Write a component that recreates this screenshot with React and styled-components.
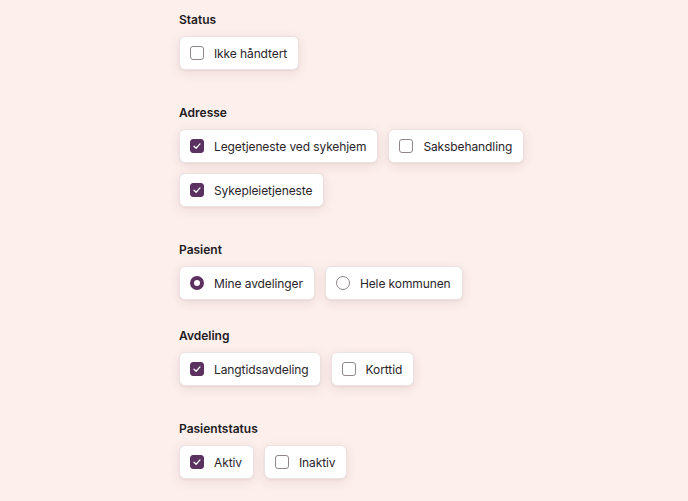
import React, { useState } from 'react';
import styled, { createGlobalStyle } from 'styled-components';

const GlobalStyle = createGlobalStyle`
    html, body {
        margin: 0;
        padding: 0;
        background: #fcefec;
    }
    body {
        font-family: Inter, "Noto Sans", sans-serif;
        color: #1e1a1e;
    }
`

const Page = styled.div`
    padding: 12px 0 20px 179px;
    display: flex;
    flex-direction: column;
    gap: 35px;
`

const Section = styled.section`
    display: flex;
    flex-direction: column;
    gap: 8px;
    margin-top: ${p => p.$tight ? '-7px' : '0'};
`

const Heading = styled.h3`
    margin: 0;
    font-size: 12px;
    line-height: 16px;
    font-weight: 600;
    color: #1e1a1e;
`

const Options = styled.div`
    display: flex;
    flex-wrap: wrap;
    gap: 10px;
    max-width: 360px;
`

const Chip = styled.label`
    display: inline-flex;
    align-items: center;
    gap: 10px;
    height: 34px;
    box-sizing: border-box;
    padding: 0 11px 0 10px;
    background: #fff;
    border: 1px solid #ece2e2;
    border-radius: 6px;
    box-shadow: 0 1px 2px rgba(70, 30, 40, 0.06), 0 3px 12px rgba(110, 50, 60, 0.10);
    font-size: 12px;
    letter-spacing: -0.1px;
    color: #2a242a;
    cursor: pointer;
    user-select: none;
`

const Box = styled.span`
    width: 14px;
    height: 14px;
    box-sizing: border-box;
    border-radius: 3px;
    display: flex;
    align-items: center;
    justify-content: center;
    background: ${p => p.checked ? '#5b3160' : '#fff'};
    border: 1px solid ${p => p.checked ? '#5b3160' : '#8e868c'};
`

const Radio = styled.span`
    width: 14px;
    height: 14px;
    box-sizing: border-box;
    border-radius: 50%;
    background: #fff;
    border: ${p => p.checked ? '4.5px solid #5b3160' : '1px solid #8e868c'};
`

const Check = () => (
    <svg width="10" height="10" viewBox="0 0 10 10" fill="none">
        <path d="M2 5.2 L4.1 7.2 L8 2.9" stroke="#fff" strokeWidth="1.3" strokeLinecap="round" strokeLinejoin="round" />
    </svg>
)

const sections = [
    { title: 'Status', type: 'check', options: [['Ikke håndtert', false]] },
    { title: 'Adresse', type: 'check', options: [['Legetjeneste ved sykehjem', true], ['Saksbehandling', false], ['Sykepleietjeneste', true]] },
    { title: 'Pasient', type: 'radio', options: [['Mine avdelinger', true], ['Hele kommunen', false]] },
    { title: 'Avdeling', type: 'check', tight: true, options: [['Langtidsavdeling', true], ['Korttid', false]] },
    { title: 'Pasientstatus', type: 'check', options: [['Aktiv', true], ['Inaktiv', false]] },
]

export default function App() {

    const [state, setState] = useState(() =>
        sections.map(s => s.options.map(o => o[1]))
    )

    const toggle = (si, oi, type) => {
        setState(prev => prev.map((row, i) => {
            if (i !== si) return row
            if (type === 'radio') return row.map((_, j) => j === oi)
            return row.map((v, j) => j === oi ? !v : v)
        }))
    }

    return (
        <>
            <GlobalStyle />
            <Page>
                {sections.map((s, si) => (
                    <Section key={s.title} $tight={s.tight}>
                        <Heading>{s.title}</Heading>
                        <Options>
                            {s.options.map(([label], oi) => {
                                const on = state[si][oi]
                                return (
                                    <Chip key={label} onClick={() => toggle(si, oi, s.type)}>
                                        {s.type === 'radio'
                                            ? <Radio checked={on} />
                                            : <Box checked={on}>{on && <Check />}</Box>}
                                        {label}
                                    </Chip>
                                )
                            })}
                        </Options>
                    </Section>
                ))}
            </Page>
        </>
    )
}
